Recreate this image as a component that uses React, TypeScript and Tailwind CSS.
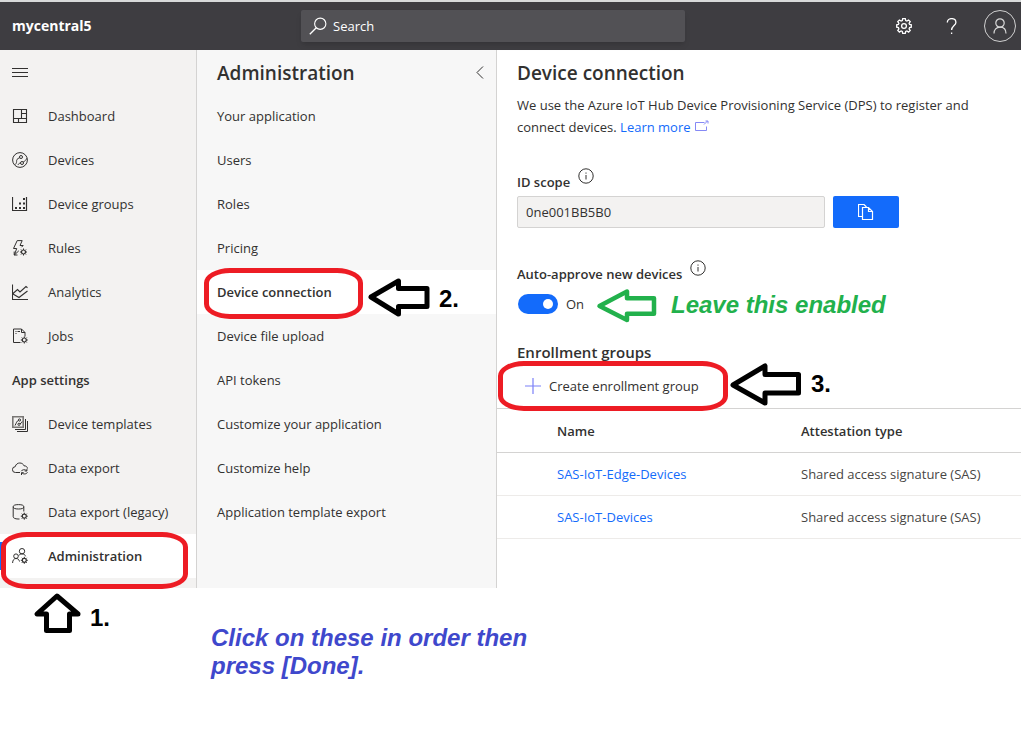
import type { ReactNode } from 'react';

function Icon({ children, className = 'size-4' }: { children: ReactNode; className?: string }) {
  return (
    <svg
      viewBox="0 0 16 16"
      className={`shrink-0 ${className}`}
      fill="none"
      stroke="currentColor"
      strokeWidth="1"
      aria-hidden="true"
    >
      {children}
    </svg>
  );
}

function MiniGear({ x, y }: { x: number; y: number }) {
  return (
    <g transform={`translate(${x} ${y})`}>
      <circle r="2" strokeWidth="1.200" />
      <path d="M0-3.500v1.500M0 2v1.500M-3.500 0h1.500M2 0h1.500M-2.500-2.500l1 1M1.500 1.500l1 1M2.500-2.500l-1 1M-1.500 1.500l-1 1" />
    </g>
  );
}

const icons: Record<string, ReactNode> = {
  dashboard: (
    <Icon>
      <path d="M1.500 1.500h13v13h-13zM9.500 1.500v9M1.500 10.500h13M9.500 5.500h5M6.500 10.500v4" strokeWidth="1.100" />
    </Icon>
  ),
  devices: (
    <Icon>
      <circle cx="8" cy="8" r="7.400" />
      <circle cx="9" cy="5" r="1.500" />
      <circle cx="10" cy="11" r="1.500" />
      <path d="M7.700 5.800C5 6.500 4.500 8 4.600 9.500c0 1.500-.8 2.500-1.600 3.200M11.200 10c1.800-.8 3-2.200 3.600-3.700M6 12.800c.6-1.200 1.300-1.600 2.500-1.700" />
    </Icon>
  ),
  groups: (
    <Icon>
      <path d="M.5 1v13.500h14V1" strokeWidth="1.200" />
      <path
        d="M3 11h2v2H3zM7 11h2v2H7zM11 11h2v2h-2zM7 6.500h2v2H7zM11 6.500h2v2h-2zM11 2h2v2h-2z"
        fill="currentColor"
        stroke="none"
      />
    </Icon>
  ),
  rules: (
    <Icon>
      <path d="M5.200.6h5L8 5.500h3.200L9.500 7.200M5.200.6L1.500 8.500h3.200L2.400 15l4.400-4.200M2.200 11.500V15H5.500" />
      <MiniGear x={11.500} y={12} />
    </Icon>
  ),
  analytics: (
    <Icon>
      <path d="M.5.500v15H16M1 9.500l4.500-4 2.500 2.500 6-5.500 1.500 1.200M1 10l6 3.500L15.500 7" strokeWidth="1.100" />
    </Icon>
  ),
  jobs: (
    <Icon>
      <path d="M8.500 14.500h-7V1h8L13 4.500v4M9.500 1v3.500H13M3.500 3.500h1M5.500 3.500h2.500M3.500 5.500h1" />
      <MiniGear x={12.300} y={12} />
    </Icon>
  ),
  templates: (
    <Icon>
      <path d="M.8.8h10.400v10.400H.8z" strokeWidth="1.600" stroke="#797775" />
      <path d="M13.500 3v10.500H3M15.500 5v10.500H5" />
      <circle cx="7.500" cy="4" r="1.100" />
      <circle cx="7" cy="8.300" r="1.100" />
      <path d="M6.500 4.500C4.500 5 4.500 7 3 9.500M8 7.800c1.200-.4 1.800-1.200 2.200-2.300" />
    </Icon>
  ),
  dataExport: (
    <Icon>
      <path d="M8 12.500H3.500a2.900 2.900 0 0 1-.300-5.800C3.800 4 6 3 7.800 3c2 0 3.500 1 4.200 2.800 2 0 3.300 1 3.500 2.700" />
      <path d="M9.200 11.200c.7-1.600 3.900-2.200 5.500-.4M14.900 8.800v2.200h-2.200M15.500 12.200c-.7 1.900-4 2.500-5.700.6M9.500 15v-2.300h2.200" />
    </Icon>
  ),
  legacy: (
    <Icon>
      <ellipse cx="6.500" cy="2.800" rx="5.300" ry="2.200" />
      <path d="M1.200 2.800v10c0 1.200 2 2.200 4.800 2.200h1.500M11.800 2.800V7.500" />
      <MiniGear x={12.300} y={12.200} />
    </Icon>
  ),
  admin: (
    <Icon>
      <circle cx="10" cy="3.200" r="2.700" />
      <circle cx="4" cy="8.200" r="2.300" />
      <path d="M.600 15c0-2.800 1.400-4.500 3.400-4.500S7 11.500 7.500 13.500M6.800 7.500C7.500 6.400 8.600 5.900 10 5.900c1.900 0 3.100.9 3.600 2.400" />
      <MiniGear x={12.300} y={12.300} />
    </Icon>
  ),
};

type NavItem = { label: string; icon: string };

const mainNav: NavItem[] = [
  { label: 'Dashboard', icon: 'dashboard' },
  { label: 'Devices', icon: 'devices' },
  { label: 'Device groups', icon: 'groups' },
  { label: 'Rules', icon: 'rules' },
  { label: 'Analytics', icon: 'analytics' },
  { label: 'Jobs', icon: 'jobs' },
];

const settingsNav: NavItem[] = [
  { label: 'Device templates', icon: 'templates' },
  { label: 'Data export', icon: 'dataExport' },
  { label: 'Data export (legacy)', icon: 'legacy' },
  { label: 'Administration', icon: 'admin' },
];

const adminNav = [
  'Your application',
  'Users',
  'Roles',
  'Pricing',
  'Device connection',
  'Device file upload',
  'API tokens',
  'Customize your application',
  'Customize help',
  'Application template export',
];

const enrollmentGroups = [
  { name: 'SAS-IoT-Edge-Devices', type: 'Shared access signature (SAS)' },
  { name: 'SAS-IoT-Devices', type: 'Shared access signature (SAS)' },
];

function Highlight({ className }: { className: string }) {
  return (
    <span
      aria-hidden="true"
      className={`pointer-events-none absolute z-10 rounded-[26px/15px] border-5 border-[#ed1c24] ${className}`}
    />
  );
}

const noteText = "font-['Liberation_Sans',Arial,sans-serif] text-2xl leading-7 font-bold";

function SideItem({ item }: { item: NavItem }) {
  const active = item.label === 'Administration';
  return (
    <li className="relative">
      <a
        href="#"
        aria-current={active ? 'page' : undefined}
        className={`flex h-11 items-center gap-5 pl-3 ${active ? 'bg-white font-semibold' : ''}`}
      >
        {icons[item.icon]}
        {item.label}
      </a>
      {active && (
        <>
          <span className="absolute top-2 left-0 h-7 w-[3px] bg-[#136bfb]" />
          <Highlight className="-top-0.5 -bottom-[11px] left-px right-2" />
        </>
      )}
    </li>
  );
}

function InfoButton({ label }: { label: string }) {
  return (
    <button type="button" aria-label={label} className="-mt-3">
      <Icon>
        <circle cx="8" cy="8" r="7.200" />
        <path d="M8 7v4.500M8 4.500v1.200" />
      </Icon>
    </button>
  );
}

function TopBar() {
  return (
    <header className="flex h-[50px] items-center border-t-2 border-[#d8dada] bg-[#3e3d41] text-white">
      <div className="w-[301px] pl-3 text-sm font-bold">mycentral5</div>
      <label className="flex h-8 w-full max-w-96 items-center gap-1.5 rounded-xs bg-[#525155] pl-2 shadow-md">
        <Icon className="size-[18px]">
          <circle cx="10" cy="6" r="5" />
          <path d="M6.500 9.500L.7 15.300" strokeWidth="1.200" />
        </Icon>
        <input
          type="search"
          aria-label="Search"
          placeholder="Search"
          className="w-full bg-transparent text-white outline-none placeholder:text-white"
        />
      </label>
      <div className="ml-auto flex items-center pr-[5px]">
        <button type="button" aria-label="Settings" className="flex size-12 items-center justify-center">
          <Icon>
            <path
              d="M6.700.7h2.600l.4 1.900 1.200.5 1.700-1.100 1.600 1.600-1.100 1.700.5 1.200 1.700.3v2.400l-1.700.4-.5 1.200 1.100 1.600-1.600 1.700-1.700-1.100-1.200.5-.4 1.800H6.700l-.4-1.800-1.200-.5-1.700 1.100-1.600-1.700 1.100-1.600-.5-1.200-1.700-.4V6.800l1.700-.3.5-1.200L1.800 3.600 3.400 2l1.700 1.100 1.200-.5z"
              strokeWidth="1.300"
            />
            <circle cx="8" cy="8" r="2.400" strokeWidth="1.300" />
          </Icon>
        </button>
        <button type="button" aria-label="Help" className="flex size-12 items-center justify-center">
          <Icon>
            <path
              d="M3.300 4.600C3.300 2.200 5 .6 7.600.6s4.300 1.600 4.300 3.800C11.900 7.200 7.600 8 7.600 12M7.600 14.500V16"
              strokeWidth="1.300"
            />
          </Icon>
        </button>
        <button
          type="button"
          aria-label="Account"
          className="ml-2 flex size-8 items-center justify-center rounded-full border border-[#d0d0d0] text-[#d8d8d8]"
        >
          <Icon>
            <circle cx="8" cy="5" r="4.200" strokeWidth="1.200" />
            <path d="M2 15.500c0-3.800 2.300-6.300 6-6.300s6 2.500 6 6.300" strokeWidth="1.200" />
          </Icon>
        </button>
      </div>
    </header>
  );
}

function Sidebar() {
  return (
    <nav aria-label="Main" className="w-[197px] shrink-0 border-r border-[#d4d3d2] bg-[#f3f2f1] pb-2.5">
      <button type="button" aria-label="Collapse navigation" className="flex h-11 items-center pl-3">
        <Icon>
          <path d="M0 4.500h16M0 8.500h16M0 12.500h16" />
        </Icon>
      </button>
      <ul>
        {mainNav.map((item) => (
          <SideItem key={item.label} item={item} />
        ))}
      </ul>
      <h2 className="flex h-11 items-center pl-3 font-semibold">App settings</h2>
      <ul>
        {settingsNav.map((item) => (
          <SideItem key={item.label} item={item} />
        ))}
      </ul>
    </nav>
  );
}

function AdminPanel() {
  return (
    <nav aria-label="Administration" className="w-[300px] shrink-0 border-r border-[#d4d3d2] bg-[#f7f7f7]">
      <div className="flex h-11 items-center justify-between pr-2 pl-5">
        <h2 className="pt-0.5 text-[19px] font-semibold">Administration</h2>
        <button type="button" aria-label="Collapse panel">
          <Icon>
            <path d="M11 2.500L5 8.500l6 6" />
          </Icon>
        </button>
      </div>
      <ul>
        {adminNav.map((label) => {
          const active = label === 'Device connection';
          return (
            <li key={label} className="relative">
              <a
                href="#"
                aria-current={active ? 'page' : undefined}
                className={`flex h-11 items-center pl-5 ${active ? 'bg-white font-semibold' : ''}`}
              >
                {label}
              </a>
              {active && (
                <>
                  <Highlight className="-top-0.5 -bottom-[5px] left-[7px] w-[159px]" />
                  <div className="absolute top-1.5 left-[171px] flex items-center gap-2 text-black">
                    <svg width="63" height="42" fill="none" stroke="currentColor" strokeWidth="5" aria-hidden="true">
                      <path d="M3 21L30.500 5v7.500H59v18H30.500V38z" strokeLinejoin="round" />
                    </svg>
                    <span className={`${noteText} mt-1`}>2.</span>
                  </div>
                </>
              )}
            </li>
          );
        })}
      </ul>
    </nav>
  );
}

function DeviceConnection() {
  return (
    <main className="min-w-0 flex-1">
      <div className="px-5">
        <h1 className="flex h-11 items-center pt-0.5 text-[19px] font-semibold">Device connection</h1>
        <p className="leading-[22px]">
          We use the Azure IoT Hub Device Provisioning Service (DPS) to register and connect devices.{' '}
          <a href="#" className="text-[#136bfb]">
            Learn more
            <svg
              viewBox="0 0 14 12"
              className="ml-1 inline h-3 w-3.5 align-baseline"
              fill="none"
              stroke="#8589f5"
              aria-hidden="true"
            >
              <path d="M9.500 2.500h-9v8h11v-4M9 4.500L12.500 1M10.500 1h2.500v2.500" />
            </svg>
          </a>
        </p>

        <div className="mt-8 flex h-6 items-center gap-2 font-semibold">
          <label htmlFor="id-scope">ID scope</label>
          <InfoButton label="About ID scope" />
        </div>
        <div className="mt-0.5 flex gap-2">
          <input
            id="id-scope"
            readOnly
            defaultValue="0ne001BB5B0"
            className="h-8 w-full max-w-[308px] rounded-xs border border-[#d4d3d2] bg-[#f3f2f1] px-2 outline-none"
          />
          <button
            type="button"
            aria-label="Copy ID scope"
            className="flex h-8 w-[66px] shrink-0 items-center justify-center rounded-xs bg-[#136bfb] text-white"
          >
            <Icon>
              <path d="M4.500 12.500h-4V.500h5.500l2.500 2.500" strokeWidth="1.200" />
              <path d="M4.500 3.500h6l4 4v8h-10zM10.500 3.500v4h4" strokeWidth="1.200" />
            </Icon>
          </button>
        </div>

        <div className="mt-[34px] flex h-6 items-center gap-2 font-semibold">
          <label htmlFor="auto-approve">Auto-approve new devices</label>
          <InfoButton label="About auto-approve" />
        </div>
        <div className="relative mt-2 flex h-5 items-center gap-2">
          <input
            id="auto-approve"
            type="checkbox"
            role="switch"
            defaultChecked
            className="ml-px h-5 w-10 appearance-none rounded-full bg-[#8a8886] before:mt-[5px] before:ml-[5px] before:block before:size-2.5 before:rounded-full before:bg-white checked:bg-[#136bfb] checked:before:ml-[25px]"
          />
          <span>On</span>
          <div className="absolute -top-2 left-[79px] flex items-center gap-3 whitespace-nowrap text-[#22b14c]">
            <svg width="63" height="40" fill="none" stroke="currentColor" strokeWidth="4.500" aria-hidden="true">
              <path d="M3.500 20L31 5.500v6.700h27v15.500H31V34z" strokeLinejoin="round" />
            </svg>
            <span className={`${noteText} -mt-0.5 italic`}>Leave this enabled</span>
          </div>
        </div>

        <h2 className="mt-[26px] text-[15px] leading-6 font-semibold">Enrollment groups</h2>
      </div>

      <div className="relative flex h-11 items-center pl-7">
        <button type="button" className="flex items-center gap-2">
          <Icon>
            <path d="M8 0v16M0 8h16" stroke="#7b80f8" strokeWidth="1.200" />
          </Icon>
          Create enrollment group
        </button>
        <Highlight className="-top-[3px] -bottom-[3px] left-px w-[230px]" />
        <div className="absolute -top-0.5 left-[233px] flex items-center gap-2 text-black">
          <svg width="73" height="46" fill="none" stroke="currentColor" strokeWidth="5" aria-hidden="true">
            <path d="M3 23L35 4v8.500h33.500v18.500H35V41z" strokeLinejoin="round" />
          </svg>
          <span className={`${noteText} -mt-0.5`}>3.</span>
        </div>
      </div>

      <table className="w-full table-fixed border-collapse text-left">
        <thead>
          <tr className="h-11 border-y border-[#d4d3d2]">
            <th className="w-[304px] pl-[60px] font-semibold">Name</th>
            <th className="font-semibold">Attestation type</th>
          </tr>
        </thead>
        <tbody>
          {enrollmentGroups.map((group) => (
            <tr key={group.name} className="h-[43px] border-b border-[#edebe9]">
              <td className="pl-[60px]">
                <a href="#" className="text-[#136bfb]">
                  {group.name}
                </a>
              </td>
              <td className="text-[#484644]">{group.type}</td>
            </tr>
          ))}
        </tbody>
      </table>
    </main>
  );
}

export default function App() {
  return (
    <div className="min-h-screen bg-white font-['Open_Sans',sans-serif] text-[13px] leading-5 text-[#323130]">
      <TopBar />
      <div className="flex">
        <Sidebar />
        <AdminPanel />
        <DeviceConnection />
      </div>
      <footer className="flex pl-8">
        <div className="flex w-[179px] gap-2 pt-1 text-black">
          <svg width="50" height="44" fill="none" stroke="currentColor" strokeWidth="5" aria-hidden="true">
            <path d="M25 4L5 22h9.500v16.500h23V22H46z" strokeLinejoin="round" />
          </svg>
          <span className={`${noteText} pt-3`}>1.</span>
        </div>
        <p className={`${noteText} max-w-[330px] pt-9 text-[#3f48cc] italic`}>
          Click on these in order then press [Done].
        </p>
      </footer>
    </div>
  );
}
